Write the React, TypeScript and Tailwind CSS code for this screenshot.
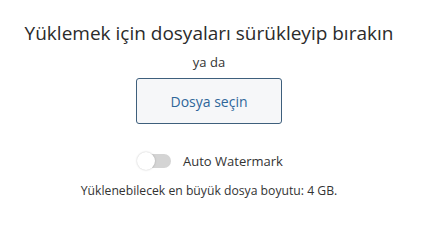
export default function App() {
  return (
    <div
      className="w-[433px] h-[244px] bg-white overflow-hidden pr-[15px]"
      style={{ fontFamily: '"Open Sans", "Noto Sans", sans-serif' }}
    >
      <div className="flex flex-col items-center pt-[20px]">
        <h1 className="text-[19px] leading-[26px] text-[#2b2b2b] font-normal">
          Yüklemek için dosyaları sürükleyip bırakın
        </h1>
        <p className="mt-[7px] text-[13px] leading-[18px] text-[#333]">ya da</p>
        <button className="mt-[7px] w-[146px] h-[46px] rounded-[3px] border border-[#3e5f7c] bg-[#f6f7f9] text-[14px] text-[#2f6699]">
          Dosya seçin
        </button>
        <div className="mt-[28px] flex items-center gap-[12px] ml-[2px]">
          <div className="relative w-[34px] h-[16px]">
            <div className="absolute left-[4px] right-0 top-[1px] h-[14px] rounded-full bg-[#d4d4d4]" />
            <div className="absolute left-0 top-[-1px] w-[18px] h-[18px] rounded-full bg-white shadow-[0_0_2px_rgba(0,0,0,0.25)]" />
          </div>
          <span className="text-[13px] leading-[18px] text-[#333]">Auto Watermark</span>
        </div>
        <p className="mt-[12px] text-[12.2px] leading-[18px] text-[#333]">
          Yüklenebilecek en büyük dosya boyutu: 4 GB.
        </p>
      </div>
    </div>
  );
}
